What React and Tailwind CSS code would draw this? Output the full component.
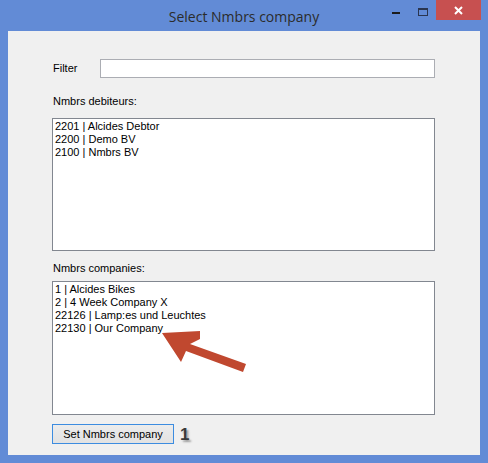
import React from 'react';

const debtors = ['2201 | Alcides Debtor', '2200 | Demo BV', '2100 | Nmbrs BV'];
const companies = ['1 | Alcides Bikes', '2 | 4 Week Company X', '22126 | Lamp:es und Leuchtes', '22130 | Our Company'];

function ListBox({ items, className, children }) {
  return (
    <div className={`relative bg-white border border-[#828790] pl-[2px] pt-[1px] ${className}`}>
      {items.map((item, i) => (
        <div key={i} className="h-[13px] leading-[13px] text-[11px] text-black whitespace-nowrap">
          {item}
        </div>
      ))}
      {children}
    </div>
  );
}

export default function App() {
  return (
    <div
      className="w-[488px] h-[463px] bg-[#628bd6] flex flex-col"
      style={{ fontFamily: '"Liberation Sans", Arial, sans-serif' }}
    >
      {/* title bar */}
      <div className="relative h-[31px] shrink-0 flex items-start justify-center">
        <span
          className="mt-[6px] text-[14px] text-[#2b2b2b]"
          style={{ fontFamily: '"Open Sans", "Noto Sans", sans-serif' }}
        >
          Select Nmbrs company
        </span>
        <div className="absolute left-[392px] top-[12px] w-[8px] h-[2px] bg-[#1c1c1c]" />
        <div className="absolute left-[418px] top-[8px] w-[10px] h-[8px] border border-t-2 border-[#2a3550]" />
        <div className="absolute left-[436px] top-0 w-[45px] h-[20px] bg-[#c75050] flex items-center justify-center">
          <svg width="9" height="9" viewBox="0 0 9 9">
            <path d="M1 1 L8 8 M8 1 L1 8" stroke="#fff" strokeWidth="2" />
          </svg>
        </div>
      </div>

      {/* client area */}
      <div className="flex-1 mx-[8px] mb-[8px] bg-[#f0f0f0] pl-[44px] pr-[45px] pt-[28px] flex flex-col">
        <div className="flex items-center h-[19px]">
          <span className="w-[48px] text-[11px] text-black pl-[1px]">Filter</span>
          <div className="flex-1 h-[19px] bg-white border border-[#abadb3]" />
        </div>

        <div className="mt-[17px] text-[11px] text-black pl-[1px] leading-[13px]">Nmbrs debiteurs:</div>
        <ListBox items={debtors} className="mt-[10px] h-[133px]" />

        <div className="mt-[11px] text-[11px] text-black pl-[1px] leading-[13px]">Nmbrs companies:</div>
        <ListBox items={companies} className="mt-[6px] h-[134px]">
          {/* pointer arrow */}
          <svg className="absolute left-[100px] top-[45px]" width="100" height="50" viewBox="0 0 100 50">
            <path d="M9 6 L47 4 L47 12 L37 17 L93 37 L90 45 L33 24 L28 35 Z" fill="#c0482f" />
          </svg>
        </ListBox>

        <div className="mt-[9px] flex items-center">
          <button className="w-[122px] h-[20px] border border-[#3c8ce0] bg-gradient-to-b from-[#ececec] to-[#e2e2e2] text-[11px] text-black leading-none">
            Set Nmbrs company
          </button>
          <span
            className="ml-[6px] text-[17px] font-bold text-[#3a3a3a] leading-none"
            style={{ textShadow: '2px 2px 2px rgba(0,0,0,0.35)' }}
          >
            1
          </span>
        </div>
      </div>
    </div>
  );
}
